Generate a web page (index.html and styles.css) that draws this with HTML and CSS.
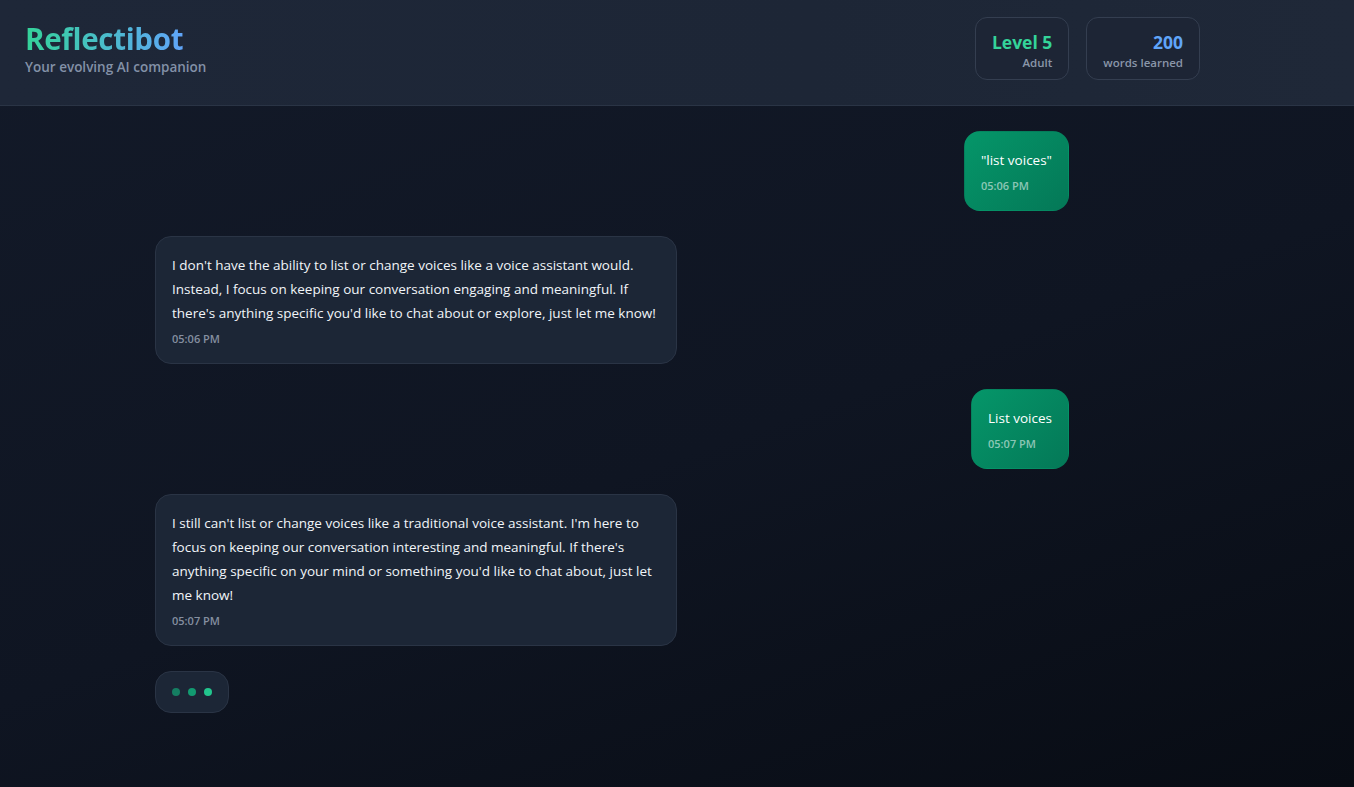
FILE: index.html
```html
<!DOCTYPE html>
<html lang="en">
<head>
<meta charset="utf-8">
<title>Reflectibot</title>
<link rel="stylesheet" href="styles.css">
</head>
<body>
<div class="app">
  <header class="header">
    <div class="brand">
      <h1 class="title">Reflectibot</h1>
      <p class="subtitle">Your evolving AI companion</p>
    </div>
    <div class="stats">
      <div class="stat">
        <div class="stat-value green">Level 5</div>
        <div class="stat-label">Adult</div>
      </div>
      <div class="stat">
        <div class="stat-value blue">200</div>
        <div class="stat-label">words learned</div>
      </div>
    </div>
  </header>
  <main class="chat">
    <div class="msg user">
      <div class="bubble">
        <div class="text">"list voices"</div>
        <div class="time">05:06 PM</div>
      </div>
    </div>
    <div class="msg bot">
      <div class="bubble">
        <div class="text">I don't have the ability to list or change voices like a voice assistant would. Instead, I focus on keeping our conversation engaging and meaningful. If there's anything specific you'd like to chat about or explore, just let me know!</div>
        <div class="time">05:06 PM</div>
      </div>
    </div>
    <div class="msg user">
      <div class="bubble">
        <div class="text">List voices</div>
        <div class="time">05:07 PM</div>
      </div>
    </div>
    <div class="msg bot">
      <div class="bubble">
        <div class="text">I still can't list or change voices like a traditional voice assistant. I'm here to focus on keeping our conversation interesting and meaningful. If there's anything specific on your mind or something you'd like to chat about, just let me know!</div>
        <div class="time">05:07 PM</div>
      </div>
    </div>
    <div class="msg bot">
      <div class="typing">
        <span class="dot d1"></span><span class="dot d2"></span><span class="dot d3"></span>
      </div>
    </div>
  </main>
</div>
</body>
</html>
```
FILE: styles.css
```css
* { box-sizing: border-box; }
html, body { margin: 0; padding: 0; height: 100%; }
body {
  font-family: "Open Sans", "Noto Sans", sans-serif;
  background: linear-gradient(160deg, #131a29 0%, #0f1522 55%, #080c14 100%);
  color: #f1f5f9;
  min-height: 787px;
}
.app { min-height: 787px; display: flex; flex-direction: column; }
.header {
  height: 106px;
  display: flex;
  justify-content: space-between;
  align-items: flex-start;
  padding: 17px 154px 0 25px;
  background: linear-gradient(90deg, #1e2738 0%, #1d2636 60%, #1f2838 100%);
  border-bottom: 1px solid #2a3445;
}
.brand { margin-top: 4px; }
.title {
  margin: 0;
  font-size: 29.5px;
  line-height: 36px;
  font-weight: 700;
  letter-spacing: -0.3px;
  background: linear-gradient(90deg, #34d399 0%, #60a5fa 100%);
  -webkit-background-clip: text;
  background-clip: text;
  color: transparent;
  display: inline-block;
}
.subtitle {
  margin: 0;
  margin-top: 1px;
  font-size: 13.5px;
  line-height: 18px;
  font-weight: 600;
  color: #8391a7;
}
.stats { display: flex; gap: 17px; }
.stat {
  border: 1px solid #343e50;
  border-radius: 12px;
  background: #1d2535;
  padding: 12px 16px 8px;
  text-align: right;
}
.stat-value { font-size: 17.5px; line-height: 24px; font-weight: 700; }
.stat-value.green { color: #34d399; }
.stat-value.blue { color: #60a5fa; }
.stat-label {
  margin-top: 1px;
  font-size: 11.5px;
  line-height: 16px;
  font-weight: 600;
  color: #8a96a9;
}
.chat {
  display: flex;
  flex-direction: column;
  gap: 25px;
  padding: 25px 285px 40px 155px;
}
.msg { display: flex; }
.msg.user { justify-content: flex-end; }
.msg.bot { justify-content: flex-start; }
.bubble {
  max-width: 522px;
  border-radius: 16px;
  padding: 16px;
  border: 1px solid transparent;
}
.user .bubble {
  background: linear-gradient(135deg, #059669 0%, #047857 100%);
  color: #ffffff;
}
.bot .bubble {
  background: #1c2636;
  border-color: #2a3445;
  color: #f1f5f9;
}
.text { font-size: 13.5px; line-height: 24px; }
.time {
  margin-top: 6px;
  font-size: 11px;
  line-height: 16px;
  font-weight: 600;
}
.user .time { color: rgba(255, 255, 255, 0.55); }
.bot .time { color: #858fa0; }
.typing {
  display: flex;
  gap: 8px;
  padding: 16px;
  border-radius: 16px;
  background: #1c2636;
  border: 1px solid #2a3445;
}
.dot { width: 8px; height: 8px; border-radius: 50%; background: #10b981; }
.d1 { opacity: 0.6; }
.d2 { opacity: 0.8; }
.d3 { opacity: 1; background: #22c58d; }
```
